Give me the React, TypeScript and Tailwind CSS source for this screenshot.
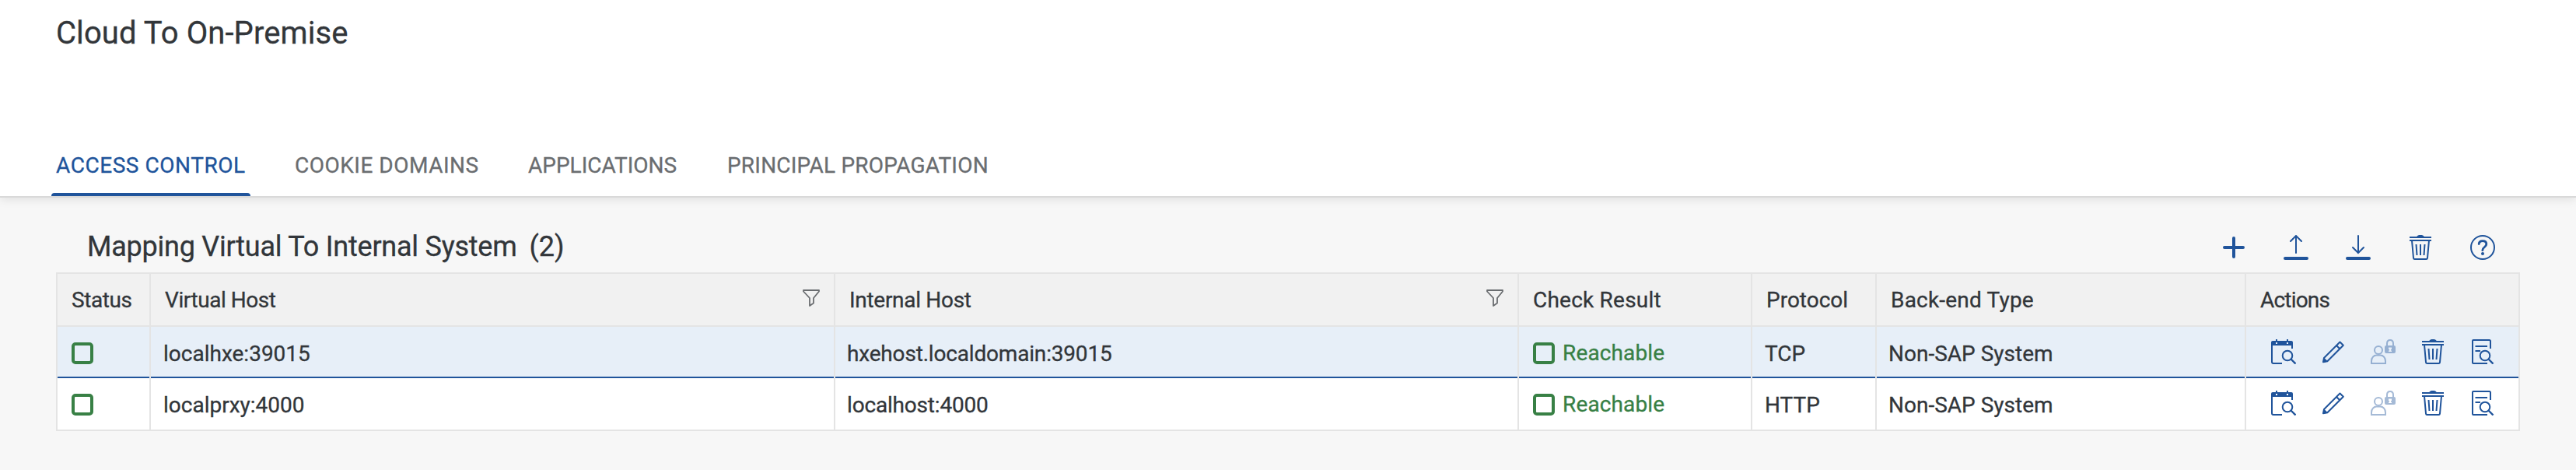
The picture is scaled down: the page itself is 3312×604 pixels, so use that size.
import React from 'react';

type IconProps = { className?: string };

const svgProps = {
  width: 32,
  height: 32,
  viewBox: '0 0 32 32',
  fill: 'none',
  stroke: 'currentColor',
  strokeWidth: 2,
};

function PlusIcon({ className }: IconProps) {
  return (
    <svg {...svgProps} className={className} strokeWidth={4} strokeLinecap="round">
      <path d="M16 4v24M4 16h24" />
    </svg>
  );
}

function UploadIcon({ className }: IconProps) {
  return (
    <svg {...svgProps} className={className} strokeLinecap="round">
      <path d="M16 23V1.5M9 8l7-7 7 7" />
      <path d="M2 30h28" strokeWidth={4} />
    </svg>
  );
}

function DownloadIcon({ className }: IconProps) {
  return (
    <svg {...svgProps} className={className} strokeLinecap="round">
      <path d="M16 1v22M9 16l7 7 7-7" />
      <path d="M2 30h28" strokeWidth={4} />
    </svg>
  );
}

function TrashIcon({ className }: IconProps) {
  return (
    <svg {...svgProps} className={className}>
      <path d="M2 3h28M2 7h28" />
      <path d="M11 2.5C12 .5 13.5 0 16 0s4 .5 5 2.5z" fill="currentColor" stroke="none" />
      <path d="M5 7l2 22.5Q7.200 31 8.500 31h15q1.300 0 1.500-1.500L27 7" />
      <path d="M10.500 12l1 14M16 12v14M21.500 12l-1 14" />
    </svg>
  );
}

function HelpIcon({ className }: IconProps) {
  return (
    <svg {...svgProps} className={className}>
      <circle cx="16" cy="16" r="15" />
      <path d="M11.200 11.500C11.400 9 13.200 7.700 16 7.700c3 0 4.800 1.500 4.800 4 0 3.800-5 3.800-5 8" strokeWidth={2.800} strokeLinecap="round" />
      <circle cx="16" cy="24" r="2" fill="currentColor" stroke="none" />
    </svg>
  );
}

function CalendarSearchIcon({ className }: IconProps) {
  return (
    <svg {...svgProps} className={className}>
      <path d="M14 31H3q-2 0-2-2V4" />
      <path d="M27 12V6" />
      <path
        d="M0 8V4q0-2 2-2h4V0h2v2h12V0h2v2h4q2 0 2 2v4zM6 4v2h2V4zM20 4v2h2V4z"
        fill="currentColor"
        fillRule="evenodd"
        stroke="none"
      />
      <circle cx="21" cy="21" r="6.300" />
      <path d="M25.500 25.500L31.500 31.500" strokeWidth={2.400} />
    </svg>
  );
}

function PencilIcon({ className }: IconProps) {
  return (
    <svg {...svgProps} className={className} strokeLinejoin="round">
      <path d="M4 24L24.500 3.500 28.800 7.800 8.300 28.300 3 29.200z" />
      <path d="M20 8l4.300 4.300" />
      <path d="M4 23.500l5 5L2.300 30z" fill="currentColor" stroke="none" />
    </svg>
  );
}

function UserLockIcon({ className }: IconProps) {
  return (
    <svg {...svgProps} className={className}>
      <circle cx="10" cy="14" r="5" />
      <path d="M1 31v-3c0-4.500 3-7.500 6.500-7.500h5c3.500 0 6.500 3 6.500 7.500v3z" />
      <path d="M21 8V5.500C21 2.800 22.700 1 25 1s4 1.800 4 4.500V8" />
      <path
        d="M20 8h10q2 0 2 2v6q0 2-2 2H20q-2 0-2-2v-6q0-2 2-2zM23 10.500v2.500h1v1.500h-1V16h4v-1.500h-1V13h1v-2.500z"
        fill="currentColor"
        fillRule="evenodd"
        stroke="none"
      />
    </svg>
  );
}

function DocumentSearchIcon({ className }: IconProps) {
  return (
    <svg {...svgProps} className={className}>
      <path d="M22 31H4q-1 0-1-1V2q0-1 1-1h20.500q1.500 0 1.500 1.500V12" />
      <path d="M6.500 9H22M6.500 15H13" />
      <circle cx="19" cy="21" r="6.300" />
      <path d="M23.500 25.500L29.500 31.500" strokeWidth={2.400} />
    </svg>
  );
}

function FilterIcon({ className }: IconProps) {
  return (
    <svg width="24" height="24" viewBox="0 0 24 24" fill="none" stroke="currentColor" strokeWidth={1.800} strokeLinejoin="round" className={className}>
      <path d="M2 2h20v1.500l-7 8.500v6.500L10 22V12L2 3.500z" />
    </svg>
  );
}

function StatusBox() {
  return <span className="size-7 shrink-0 rounded-[5px] border-4 border-[#388045]" />;
}

const rows = [
  { virtual: 'localhxe:39015', internal: 'hxehost.localdomain:39015', protocol: 'TCP', selected: true },
  { virtual: 'localprxy:4000', internal: 'localhost:4000', protocol: 'HTTP', selected: false },
];

const columns = 'grid grid-cols-[120px_880px_879px_300px_160px_475px_350px]';
const headCell = 'flex h-[66px] items-center border-r-2 border-[#e4e4e4] pl-[18px]';

export default function App() {
  return (
    <div className="h-[604px] w-[3312px] overflow-hidden bg-[#f7f7f7] font-['Roboto','Noto_Sans',sans-serif] text-[28px] leading-[32px] whitespace-nowrap text-[#32363a] [-webkit-text-stroke:0.3px]">
      <header className="flex h-[254px] flex-col justify-between border-b-2 border-[#d9d9d9] bg-white pl-[66px] shadow-[0_2px_12px_rgba(0,0,0,0.10)]">
        <h1 className="pt-[19px] pl-[6px] text-[40px] leading-[48px] tracking-[0.08px]">Cloud To On-Premise</h1>
        <nav className="flex h-[55px] text-[#6a6d70]">
          <div className="flex w-[256px] flex-col justify-between text-[#20549b]">
            <span className="pl-[6px] tracking-[0.54px]">ACCESS CONTROL</span>
            <span className="h-1 rounded-t-[4px] bg-[#20549b]" />
          </div>
          <span className="w-[299px] pl-[57px] tracking-[0.5px]">COOKIE DOMAINS</span>
          <span className="w-[258px] pl-[58px]">APPLICATIONS</span>
          <span className="pl-[56px] tracking-[0.2px]">PRINCIPAL PROPAGATION</span>
        </nav>
      </header>

      <main className="pt-[26px] pl-[72px]">
        <div className="flex h-[70px] w-[3168px] items-center justify-between pr-[32px] pl-[40px]">
          <h2 className="flex gap-[16px] pt-[3px] text-[36px] leading-[44px]">
            <span className="tracking-[-0.24px]">Mapping Virtual To Internal System</span>
            <span>(2)</span>
          </h2>
          <div className="flex gap-[48px] pt-[6px] text-[#20549b]">
            <PlusIcon />
            <UploadIcon />
            <DownloadIcon />
            <TrashIcon />
            <HelpIcon />
          </div>
        </div>

        <section className="w-[3168px] border-2 border-[#e4e4e4] bg-white">
          <div className={`${columns} h-[68px] border-b-2 border-[#e4e4e4] bg-[#f1f1f1]`}>
            <div className={`${headCell} pt-px tracking-[-0.4px]`}>Status</div>
            <div className={`${headCell} justify-between pr-[17px] pt-px`}>
              <span className="tracking-[-0.45px]">Virtual Host</span>
              <FilterIcon className="mb-[5px] text-[#6a6d70]" />
            </div>
            <div className={`${headCell} justify-between pr-[17px] pt-px`}>
              <span className="tracking-[-0.3px]">Internal Host</span>
              <FilterIcon className="mb-[5px] text-[#6a6d70]" />
            </div>
            <div className={`${headCell} pt-px tracking-[0.22px]`}>Check Result</div>
            <div className={`${headCell} pt-px`}>Protocol</div>
            <div className={`${headCell} pt-px tracking-[0.2px]`}>Back-end Type</div>
            <div className="flex h-[66px] items-center pt-px pl-[18px] tracking-[-0.8px]">Actions</div>
          </div>

          {rows.map((row) => {
            const cell = `flex h-[66px] items-center border-r-2 border-[#e4e4e4] pt-[3px] ${
              row.selected ? 'bg-[#e7eff8] shadow-[inset_0_-2px_0_#20549b]' : 'bg-white'
            }`;
            return (
              <div key={row.virtual} className={columns}>
                <div className={`${cell} pb-px pl-[18px]`}>
                  <StatusBox />
                </div>
                <div className={`${cell} pl-[16px]`}>{row.virtual}</div>
                <div className={`${cell} pl-[15px] tracking-[-0.18px]`}>{row.internal}</div>
                <div className={`${cell} gap-[10px] pb-px pl-[18px] text-[#388045]`}>
                  <StatusBox />
                  <span className="tracking-[0.14px]">Reachable</span>
                </div>
                <div className={`${cell} pl-[16px]`}>{row.protocol}</div>
                <div className={`${cell} pl-[15px]`}>Non-SAP System</div>
                <div
                  className={`flex h-[66px] items-center gap-[32px] pb-[2px] pl-[32px] text-[#20549b] ${
                    row.selected ? 'bg-[#e7eff8] shadow-[inset_0_-2px_0_#20549b]' : 'bg-white'
                  }`}
                >
                  <CalendarSearchIcon />
                  <PencilIcon />
                  <UserLockIcon className="opacity-40" />
                  <TrashIcon />
                  <DocumentSearchIcon />
                </div>
              </div>
            );
          })}
        </section>
      </main>
    </div>
  );
}
